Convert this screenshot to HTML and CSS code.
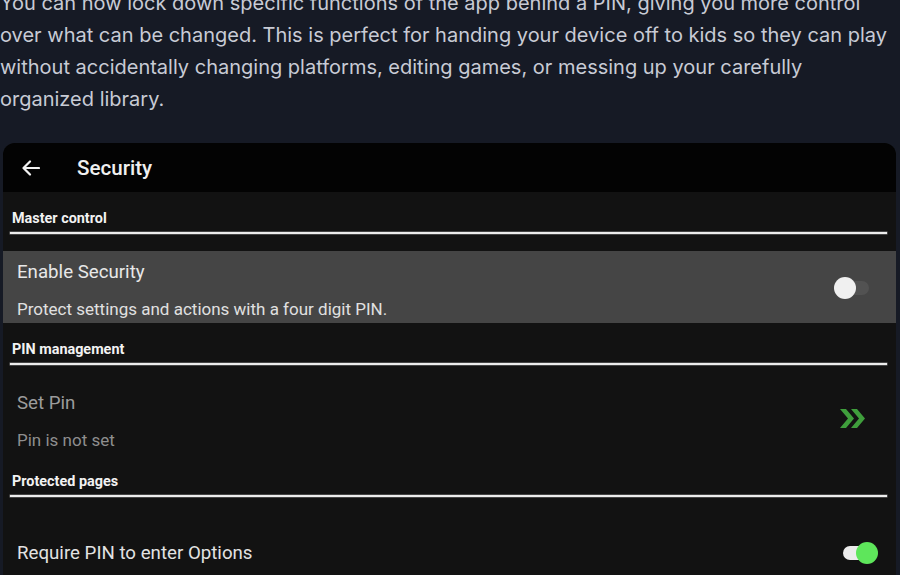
FILE: index.html
```html
<!DOCTYPE html>
<html>
<head>
<meta charset="utf-8">
<link rel="stylesheet" href="styles.css">
</head>
<body>
<p class="intro">You can now lock down specific functions of the app behind a PIN, giving you more control over what can be changed. This is perfect for handing your device off to kids so they can play without accidentally changing platforms, editing games, or messing up your carefully organized library.</p>
<div class="card">
  <div class="topbar">
    <svg class="back" width="18" height="16" viewBox="0 0 18 16"><path d="M17 8H2M8 1.5L1.5 8 8 14.5" fill="none" stroke="#f2f2f2" stroke-width="2.2" stroke-linecap="round" stroke-linejoin="round"/></svg>
    <span class="title">Security</span>
  </div>
  <div class="content">
    <div class="section-head">Master control</div>
    <div class="rule"></div>
    <div class="row row-active">
      <div class="texts">
        <div class="row-title">Enable Security</div>
        <div class="row-sub">Protect settings and actions with a four digit PIN.</div>
      </div>
      <div class="toggle toggle-off"><span class="track"></span><span class="thumb"></span></div>
    </div>
    <div class="section-head">PIN management</div>
    <div class="rule"></div>
    <div class="row row-dim">
      <div class="texts">
        <div class="row-title">Set Pin</div>
        <div class="row-sub">Pin is not set</div>
      </div>
      <svg class="chev" width="27" height="19" viewBox="0 0 27 19"><path d="M1 0h6l8 9.5L7 19H1l8-9.5z M12 0h6l8 9.5L18 19h-6l8-9.5z" fill="#3f9e3c"/></svg>
    </div>
    <div class="section-head section-head-last">Protected pages</div>
    <div class="rule"></div>
    <div class="row row-single">
      <div class="texts">
        <div class="row-title">Require PIN to enter Options</div>
      </div>
      <div class="toggle toggle-on"><span class="track"></span><span class="thumb"></span></div>
    </div>
  </div>
</div>
</body>
</html>
```
FILE: styles.css
```css
html, body {
  margin: 0;
  padding: 0;
  background: #161a25;
  overflow: hidden;
  height: 575px;
}
.intro {
  margin: -13px 0 0 0;
  padding: 0;
  font-family: Inter, "Noto Sans", sans-serif;
  font-size: 20px;
  line-height: 32px;
  color: #c8cbd5;
  width: 892px;
}
.card {
  margin: 28px 4px 0 3px;
  border-radius: 12px 12px 0 0;
  overflow: hidden;
  background: #121212;
  font-family: Roboto, "Noto Sans", sans-serif;
  height: 440px;
}
.topbar {
  height: 49px;
  background: #030303;
  display: flex;
  align-items: center;
}
.back {
  margin-left: 19px;
  flex: none;
}
.title {
  margin-left: 37px;
  font-size: 20.6px;
  font-weight: 500;
  color: #f0f0f0;
}
.section-head {
  height: 40px;
  box-sizing: border-box;
  padding: 19px 0 0 9px;
  font-size: 14.4px;
  line-height: 16px;
  font-weight: 700;
  color: #f2f2f2;
}
.section-head-last {
  height: 41px;
  padding-top: 20px;
}
.rule {
  margin: 0 9px 17px 7px;
  height: 2px;
  background: #ececec;
  box-shadow: 0 0 0 0.5px #777;
}
.row {
  display: flex;
  align-items: center;
  justify-content: space-between;
  height: 72px;
  box-sizing: border-box;
  padding-left: 14px;
}
.texts {
  display: flex;
  flex-direction: column;
  align-self: flex-start;
  padding-top: 10px;
}
.row-title {
  font-size: 18.7px;
  line-height: 22px;
}
.row-sub {
  margin-top: 16px;
  font-size: 17px;
  line-height: 20px;
}
.row-active {
  background: #454545;
}
.row-active .row-title { color: #e8e8e8; }
.row-active .row-sub { color: #e0e0e0; }
.row-dim .row-title { color: #9c9c9c; }
.row-dim .row-sub { color: #8e8e8e; }
.row-single {
  height: 78px;
}
.row-single .texts {
  align-self: center;
  padding-top: 0;
}
.row-single .row-title { color: #e2e2e2; }
.toggle {
  position: relative;
  width: 35px;
  height: 22px;
  flex: none;
}
.toggle .track {
  position: absolute;
  top: 4px;
  height: 14px;
  border-radius: 7px;
}
.toggle .thumb {
  position: absolute;
  top: 0;
  width: 22px;
  height: 22px;
  border-radius: 50%;
}
.toggle-off {
  margin-right: 27px;
  margin-top: 2px;
}
.toggle-off .track {
  left: 10px;
  right: 0;
  background: #525252;
}
.toggle-off .thumb {
  left: 0;
  background: #f0f0f0;
}
.toggle-on {
  margin-right: 18px;
}
.toggle-on .track {
  left: 0;
  right: 10px;
  background: #ececec;
}
.toggle-on .thumb {
  right: 0;
  background: #5ee65b;
}
.chev {
  margin-right: 30px;
  flex: none;
}
```
